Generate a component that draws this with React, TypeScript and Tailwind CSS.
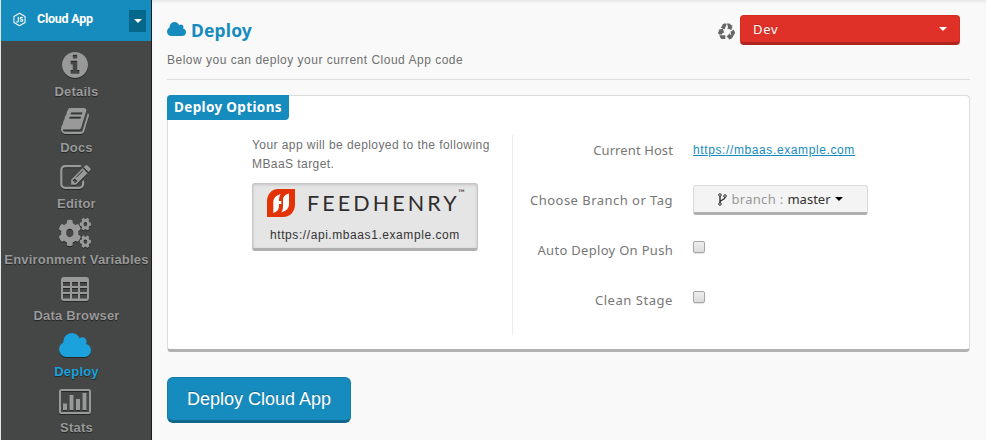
import React from "react";
import { FaCogs } from "react-icons/fa";

type IconProps = { className?: string };

const InfoIcon = ({ className }: IconProps) => (
  <svg viewBox="128 128 1536 1536" className={className} fill="currentColor">
    <path d="M1152 1376v-160q0-14-9-23t-23-9h-96v-512q0-14-9-23t-23-9h-320q-14 0-23 9t-9 23v160q0 14 9 23t23 9h96v320h-96q-14 0-23 9t-9 23v160q0 14 9 23t23 9h448q14 0 23-9t9-23zm-128-896v-160q0-14-9-23t-23-9h-192q-14 0-23 9t-9 23v160q0 14 9 23t23 9h192q14 0 23-9t9-23zm640 416q0 209-103 385.5t-279.5 279.5-385.5 103-385.5-103-279.5-279.5-103-385.5 103-385.5 279.5-279.5 385.5-103 385.5 103 279.5 279.5 103 385.5z" />
  </svg>
);

const BookIcon = ({ className }: IconProps) => (
  <svg viewBox="64 128 1664 1536" className={className} fill="currentColor">
    <path d="M1703 478q40 57 18 129l-275 906q-19 64-76.5 107.5t-122.5 43.5h-923q-77 0-148.5-53.5t-99.5-131.5q-24-67-2-127 0-4 3-27t4-37q1-8-3-21.5t-3-19.5q2-11 8-21t16.5-23.5 16.5-23.5q23-38 45-91.5t30-91.5q3-10 .5-30t-.5-28q3-11 17-28t17-23q21-36 42-92t25-90q1-9-2.5-32t.5-28q4-13 22-30.5t22-22.5q19-26 42.5-84.5t27.5-96.5q1-8-3-25.5t-2-26.5q2-8 9-18t18-23 17-21q8-12 16.5-30.5t15-35 16-36 19.5-32 26.5-23.5 36-11.5 47.5 5.5l-1 3q38-9 51-9h761q74 0 114 56t18 130l-274 906q-36 119-71.5 153.5t-128.5 34.5h-869q-27 0-38 15-11 16-1 43 24 70 144 70h923q29 0 56-15.5t35-41.5l300-987q7-22 5-57 38 15 59 43zm-1064 2q-4 13 2 22.5t20 9.5h608q13 0 25.5-9.5t16.5-22.5l21-64q4-13-2-22.5t-20-9.5h-608q-13 0-25.5 9.5t-16.5 22.5zm-83 256q-4 13 2 22.5t20 9.5h608q13 0 25.5-9.5t16.5-22.5l21-64q4-13-2-22.5t-20-9.5h-608q-13 0-25.5 9.5t-16.5 22.5z" />
  </svg>
);

const EditIcon = ({ className }: IconProps) => (
  <svg viewBox="0 128 1792 1408" className={className} fill="currentColor">
    <path d="M888 1184l116-116-152-152-116 116v56h96v96h56zm440-720q-16-16-33 1l-350 350q-17 17-1 33t33-1l350-350q17-17 1-33zm80 594v190q0 119-84.5 203.5t-203.5 84.5h-832q-119 0-203.5-84.5t-84.5-203.5v-832q0-119 84.5-203.5t203.5-84.5h832q63 0 117 25 15 7 18 23 3 17-9 29l-49 49q-14 14-32 8-23-6-45-6h-832q-66 0-113 47t-47 113v832q0 66 47 113t113 47h832q66 0 113-47t47-113v-126q0-13 9-22l64-64q15-15 35-7t20 29zm-96-738l288 288-672 672h-288v-288zm444 132l-92 92-288-288 92-92q28-28 68-28t68 28l152 152q28 28 28 68t-28 68z" />
  </svg>
);

const TableIcon = ({ className }: IconProps) => (
  <svg viewBox="0 0 28 24" className={className} fill="currentColor" fillRule="evenodd">
    <path d="M3 0h22a3 3 0 0 1 3 3v18a3 3 0 0 1-3 3H3a3 3 0 0 1-3-3V3a3 3 0 0 1 3-3zM2 5v4h7V5zm9 0v4h6V5zm8 0v4h7V5zM2 11v4h7v-4zm9 0v4h6v-4zm8 0v4h7v-4zM2 17v4.500h7V17zm9 0v4.500h6V17zm8 0v4.500h7V17z" />
  </svg>
);

const CloudIcon = ({ className }: IconProps) => (
  <svg viewBox="64 128 1920 1408" preserveAspectRatio="none" className={className} fill="currentColor">
    <path d="M1984 1152q0 159-112.500 271.500t-271.500 112.500h-1088q-185 0-316.500-131.500t-131.500-316.500q0-132 71-241.500t187-163.500q-2-28-2-43 0-212 150-362t362-150q158 0 286.500 88t187.500 230q70-62 166-62 106 0 181 75t75 181q0 75-41 138 129 30 213 134.500t84 239.500z" />
  </svg>
);

const StatsIcon = ({ className }: IconProps) => (
  <svg viewBox="0 0 32 25" className={className} fill="currentColor">
    <rect x="1" y="1" width="30" height="23" rx="1.500" fill="none" stroke="currentColor" strokeWidth="2" />
    <path d="M4 14.500h4V21H4zM10.500 6h4v15h-4zM17 10h4v11h-4zM23.500 4h4v17h-4z" />
  </svg>
);

const RecycleIcon = ({ className }: IconProps) => (
  <svg viewBox="0 0 17 17" className={className} fill="currentColor">
    <path d="M2.900 4.700 5 1.200Q5.500.4 6.400.4h1.900L8.700 1 6.500 6.600z" />
    <path d="M9 .4h2q.9 0 1.400.8l.8 1.400 1.300-.7-1 5-4.700-1.600 1.300-.8z" />
    <path d="m12.400 8.700 3.200-2 1.200 2.100q.4.800 0 1.600l-1 1.900h-2.400z" />
    <path d="M8.700 13.600 12 10v1.800h3.800l-1.600 3.300q-.4.800-1.300.8H12V17z" />
    <path d="M1.300 12.200h6v3.900H3.900q-.9 0-1.300-.8z" />
    <path d="M.2 6.800 4.900 5.700l1.500 4.600-1.400-.7-1.200 2H1L.2 10.200Q0 9.600.4 9l.9-1.400z" />
  </svg>
);

const BranchIcon = ({ className }: IconProps) => (
  <svg viewBox="0 0 9 13" className={className} fill="none" stroke="currentColor">
    <circle cx="2" cy="2" r="1.300" />
    <circle cx="2" cy="11" r="1.300" />
    <circle cx="7" cy="3" r="1.300" />
    <path d="M2 3v7M7 4c0 3.300-4.600 2.300-5 5" strokeWidth="1.400" />
  </svg>
);

const NodeIcon = ({ className }: IconProps) => (
  <svg viewBox="0 0 14 15" className={className} fill="none" stroke="currentColor">
    <path d="M7 .8 13 4.200v6.600L7 14.200 1 10.800V4.200z" strokeWidth="1.100" strokeLinejoin="round" />
    <path d="M5.700 4.500v4.700c0 1.100-1.200 1.300-2.200.7M10.600 5.600c-.8-.6-2.900-.6-2.900.6 0 1.400 3 .7 3 2.200 0 1.400-2.400 1.300-3.200.4" strokeWidth="1.200" />
  </svg>
);

const FeedHenryMark = ({ className }: IconProps) => (
  <svg viewBox="0 0 28 28" className={className}>
    <path d="M11 0h17v15.500C28 22.500 23 28 16 28H0V12.500C0 5.500 4.500 0 11 0z" fill="#e33205" />
    <path d="M13.800 5C8.500 6.500 6.300 9.500 6.300 13.500V24c3.500-1 5.700-3.500 5.700-7v-2h2.300v-3H12c0-2.800.3-5 1.800-7z" fill="#fff" />
    <path d="M22 4.500c-3.600 1-6 3-6 6.500V16c0 3-.2 5.500-1.900 7.500 5.700-1.500 7.900-4.500 7.900-8.500z" fill="#fff" />
  </svg>
);

const Caret = ({ className }: IconProps) => (
  <svg viewBox="0 0 8 4" className={className} fill="currentColor">
    <path d="M0 0h8L4 4z" />
  </svg>
);

const navItems = [
  { label: "Details", icon: <InfoIcon className="h-[26px] w-[26px]" /> },
  { label: "Docs", icon: <BookIcon className="h-[26px] w-7" /> },
  { label: "Editor", icon: <EditIcon className="h-6 w-[31px]" /> },
  { label: "Environment Variables", icon: <FaCogs className="h-[30px] w-8" preserveAspectRatio="none" /> },
  { label: "Data Browser", icon: <TableIcon className="h-6 w-7" /> },
  { label: "Deploy", icon: <CloudIcon className="h-6 w-8" />, active: true },
  { label: "Stats", icon: <StatsIcon className="h-[25px] w-8" /> },
];

function Sidebar() {
  return (
    <aside className="flex h-full w-[152px] shrink-0 flex-col border-r border-l border-l-[#e5e5e5] border-r-[#1c1c1c] bg-[#454746]">
      <div className="flex h-[41px] shrink-0 items-center bg-[#168bbd] pr-[5px] pb-[3px] pl-3 text-white">
        <NodeIcon className="h-[15px] w-[13px]" />
        <span className="ml-[11px] grow font-['Roboto',sans-serif] text-[12.500px] leading-4 font-bold tracking-[-0.250px]">Cloud App</span>
        <button className="mt-1 flex h-[22px] w-[17px] items-center justify-center bg-[#05688a]">
          <Caret className="h-1 w-2" />
        </button>
      </div>
      <nav className="flex flex-col pt-[9px]">
        {navItems.map((item) => (
          <a
            key={item.label}
            className={`flex h-14 flex-col items-center ${item.active ? "text-[#1ba1dc]" : "text-[#999]"}`}
          >
            <span className="flex h-[30px] items-center pr-[2px] drop-shadow-[0_1px_0_rgba(0,0,0,0.45)]">{item.icon}</span>
            <span className="mt-[3px] ml-px text-[13px] leading-[18px] font-bold tracking-[0.2px] whitespace-nowrap [text-shadow:0_1px_1px_rgba(0,0,0,0.5)]">
              {item.label}
            </span>
          </a>
        ))}
      </nav>
    </aside>
  );
}

type FieldProps = { label: string; spacing: string; children: React.ReactNode };

function Field({ label, spacing, children }: FieldProps) {
  return (
    <div className="flex h-[50px] items-start">
      <span className={`mt-[5px] w-40 text-right font-['Noto_Sans',sans-serif] text-[13px] leading-5 text-[#777] ${spacing}`}>
        {label}
      </span>
      <div className="ml-5">{children}</div>
    </div>
  );
}

const Checkbox = () => (
  <span className="mt-[6px] block h-3 w-3 rounded-[2px] border border-[#a6a6a6] bg-linear-to-b from-[#eee] to-[#dcdcdc] shadow-[0_1px_1px_rgba(0,0,0,0.12)]" />
);

export default function App() {
  return (
    <div className="flex h-[440px] w-[986px] overflow-hidden bg-[#f9f9f9] font-['Liberation_Sans',Arial,sans-serif]">
      <Sidebar />
      <main className="grow pr-4 pl-[15px] shadow-[inset_0_3px_3px_-1px_rgba(0,0,0,0.07)]">
        <header className="flex h-20 justify-between border-b border-[#dedede]">
          <div>
            <h1 className="mt-[18px] flex h-6 items-center text-[#168bbd]">
              <CloudIcon className="mb-[2px] h-[14px] w-[19px]" />
              <span className="ml-[5px] font-['Noto_Sans',sans-serif] text-[17.500px] leading-6 font-bold tracking-[0.150px]">Deploy</span>
            </h1>
            <p className="mt-2 text-[12px] leading-5 tracking-[0.5px] text-[#707070]">
              Below you can deploy your current Cloud App code
            </p>
          </div>
          <div className="mt-[15px] mr-[10px] flex h-[30px] items-center">
            <RecycleIcon className="mt-[2px] mr-[5px] h-[17px] w-[17px] text-[#666]" />
            <button className="flex h-[30px] w-[220px] items-center justify-between rounded-[4px] border border-b-[3px] border-[#d42b22] border-b-[#ae241e] bg-[#df3127] pr-3 pl-3 text-white">
              <span className="font-['Noto_Sans',sans-serif] text-[13px] leading-5 tracking-[0.7px] [text-shadow:0_-1px_0_rgba(0,0,0,0.2)]">Dev</span>
              <Caret className="h-1 w-2" />
            </button>
          </div>
        </header>

        <section className="mt-[15px] flex h-[257px] flex-col rounded-[4px] border border-b-[3px] border-[#dcdcdc] border-b-[#b2b2b2] bg-white">
          <h2 className="-mt-px -ml-px h-[25px] w-[122px] rounded-tl-[4px] rounded-br-[4px] bg-[#168bbd] pl-[7px] font-['Noto_Sans',sans-serif] text-[13.500px] leading-[25px] font-bold tracking-[0.350px] whitespace-nowrap text-white">
            Deploy Options
          </h2>
          <div className="mt-[15px] flex h-[200px]">
            <div className="w-[344px] pl-[84px]">
              <p className="pt-px text-[12px] leading-[19px] tracking-[0.43px] whitespace-nowrap text-[#707070]">
                Your app will be deployed to the following
                <br />
                MBaaS target.
              </p>
              <div className="mt-[9px] flex h-[68px] w-[226px] flex-col items-center rounded-[3px] border border-b-[3px] border-[#c4c4c4] border-b-[#b0b0b0] bg-[#e5e5e5] shadow-[inset_0_1px_3px_rgba(0,0,0,0.15)]">
                <div className="mt-[5px] flex h-7 w-[200px] items-start text-[#302d2d]">
                  <FeedHenryMark className="ml-[2px] h-7 w-7 shrink-0" />
                  <span className="ml-3 w-[153px] shrink-0 font-['Lato',sans-serif] text-[21.500px] leading-7 tracking-[3.100px]">FEEDHENRY</span>
                  <span className="-mt-px -ml-[2px] font-['Lato',sans-serif] text-[9px] leading-[10px]">™</span>
                </div>
                <span className="mt-[9px] text-[12px] leading-[18px] tracking-[0.570px] text-[#333]">https://api.mbaas1.example.com</span>
              </div>
            </div>
            <div className="border-l border-[#ececec]">
              <Field label="Current Host" spacing="tracking-[0.1px]">
                <a className="mt-[5px] block text-[12px] leading-5 tracking-[0.610px] text-[#168bbd] underline">https://mbaas.example.com</a>
              </Field>
              <Field label="Choose Branch or Tag" spacing="tracking-[0.470px]">
                <button className="flex h-[30px] w-[175px] items-center justify-center rounded-[3px] border border-b-[3px] border-[#d9d9d9] border-b-[#b0b0b0] bg-[#f4f4f4] font-['Noto_Sans',sans-serif] text-[13px] leading-5 text-[#333]">
                  <BranchIcon className="mr-1 h-[13px] w-[9px]" />
                  <span className="mr-1 tracking-[0.3px] text-[#999]">branch :</span>
                  <span>master</span>
                  <Caret className="ml-1 h-1 w-2 text-black" />
                </button>
              </Field>
              <Field label="Auto Deploy On Push" spacing="tracking-[0.3px]">
                <Checkbox />
              </Field>
              <Field label="Clean Stage" spacing="tracking-[0.550px]">
                <Checkbox />
              </Field>
            </div>
          </div>
        </section>

        <button className="mt-[25px] block h-[46px] w-[184px] rounded-[6px] border border-b-[3px] border-[#147ca9] border-b-[#10668b] bg-[#168bbd] text-[18px] leading-[42px] whitespace-nowrap text-white [text-shadow:0_-1px_0_rgba(0,0,0,0.25)]">
          Deploy Cloud App
        </button>
      </main>
    </div>
  );
}
